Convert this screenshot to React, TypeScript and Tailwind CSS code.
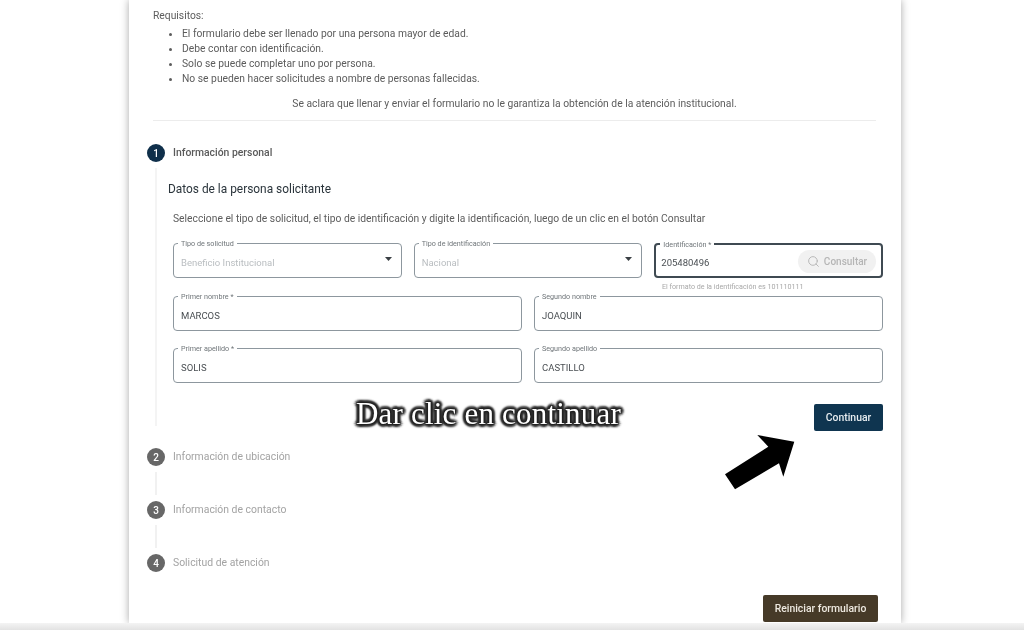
import React from "react"
import { Search } from "lucide-react"

const requisitos = [
    "El formulario debe ser llenado por una persona mayor de edad.",
    "Debe contar con identificación.",
    "Solo se puede completar uno por persona.",
    "No se pueden hacer solicitudes a nombre de personas fallecidas.",
]

const Caret = () => (
    <svg width="7" height="4" viewBox="0 0 7 4" className="mb-[3px] shrink-0">
        <path d="M0 0 L7 0 L3.5 4 Z" fill="#3a3f44" />
    </svg>
)

interface FieldProps {
    label: string,
    value: string,
    disabled?: boolean,
    focused?: boolean,
    className?: string,
    children?: React.ReactNode,
}

const Field = ({ label, value, disabled, focused, className, children }: FieldProps) => (
    <div className={`relative flex h-[35px] items-center rounded-[4px] bg-white ${focused ? "border-2 border-[#3f4a52] pl-[5px]" : "border border-[#8d979e] pl-[7px]"} ${className ?? ""}`}>
        <span className="absolute left-[4px] top-[-5px] bg-white px-[3px] text-[7.2px] leading-[9px] text-[#6f7579]">{label}</span>
        <span className={`flex-1 pt-[5px] text-[9.5px] ${disabled ? "text-[#b9bdc0]" : "text-[#4a4f53]"}`}>{value}</span>
        {children}
    </div>
)

const StepCircle = ({ n, active }: { n: number, active?: boolean }) => (
    <div className={`flex h-[18px] w-[18px] shrink-0 items-center justify-center rounded-full text-[10px] font-medium text-white ${active ? "bg-[#0f2f4a]" : "bg-[#676767]"}`}>
        {n}
    </div>
)

const Step = ({ n, label, last }: { n: number, label: string, last?: boolean }) => (
    <div className="flex flex-col">
        <div className="flex h-[18px] items-center gap-[8px]">
            <StepCircle n={n} />
            <span className="text-[10.4px] text-[#a3a3a3]">{label}</span>
        </div>
        {!last && <div className="my-[6px] ml-[8px] h-[23px] w-[2px] bg-[#f1f1f1]" />}
    </div>
)

export default function App() {
    return (
        <div className="flex h-[630px] w-[1024px] flex-col overflow-hidden bg-white font-['Roboto',sans-serif] blur-[0.4px]">
            <div className="ml-[129px] h-[623px] w-[772px] bg-white pl-[24px] pr-[18px] shadow-[0_0_8px_rgba(0,0,0,0.35)]">
                <p className="pt-[8px] text-[10.3px] leading-[15px] text-[#5c5c5c]">Requisitos:</p>
                <ul className="mt-[3px] list-disc pl-[29px] text-[10.3px] leading-[15px] text-[#5c5c5c]">
                    {requisitos.map((r) => <li key={r}>{r}</li>)}
                </ul>
                <p className="mr-[7px] mt-[10px] text-center text-[10.3px] leading-[15px] text-[#5c5c5c]">
                    Se aclara que llenar y enviar el formulario no le garantiza la obtención de la atención institucional.
                </p>
                <div className="mr-[7px] mt-[9px] h-px bg-[#ececec]" />

                <div className="ml-[-6px]">
                    <div className="mt-[23px] flex h-[18px] items-center gap-[8px]">
                        <StepCircle n={1} active />
                        <span className="text-[10.4px] font-medium text-[#5a5a5a]">Información personal</span>
                    </div>

                    <div className="flex">
                        <div className="my-[6px] ml-[8px] w-[2px] bg-[#f4f4f4]" />
                        <div className="flex-1 pl-[11px]">
                            <h2 className="mt-[18px] text-[11.9px] leading-[18px] text-[#2a343b]">Datos de la persona solicitante</h2>
                            <p className="mt-[13px] pl-[5px] text-[10.3px] leading-[15px] text-[#5c5c5c]">
                                Seleccione el tipo de solicitud, el tipo de identificación y digite la identificación, luego de un clic en el botón Consultar
                            </p>
                            <div className="ml-[5px] mt-[17px] flex flex-col">
                                <div className="grid grid-cols-3 gap-[12px]">
                                    <Field label="Tipo de solicitud" value="Beneficio Institucional" disabled className="pr-[9px]"><Caret /></Field>
                                    <Field label="Tipo de identificación" value="Nacional" disabled className="pr-[9px]"><Caret /></Field>
                                    <Field label="Identificación *" value="205480496" focused className="pr-[5px]">
                                        <div className="mt-[2px] flex h-[23px] w-[78px] items-center justify-center gap-[4px] rounded-full bg-[#f1f1f1] text-[10px] font-medium text-[#b5b5b5]">
                                            <Search size={13} strokeWidth={1.75} />
                                            <span>Consultar</span>
                                        </div>
                                    </Field>
                                </div>
                                <p className="ml-auto h-[18px] w-[228px] pl-[7px] pt-[4px] text-[7.15px] leading-[10px] text-[#a8a8a8]">El formato de la identificación es 101110111</p>
                                <div className="flex gap-[12px]">
                                    <Field label="Primer nombre *" value="MARCOS" className="flex-1" />
                                    <Field label="Segundo nombre" value="JOAQUIN" className="flex-1" />
                                </div>
                                <div className="mt-[17px] flex gap-[12px]">
                                    <Field label="Primer apellido *" value="SOLIS" className="flex-1" />
                                    <Field label="Segundo apellido" value="CASTILLO" className="flex-1" />
                                </div>
                                <div className="mt-[21px] flex items-start">
                                    <div className="ml-[183px] mt-[-8px] whitespace-nowrap font-['Liberation_Serif',serif] text-[31px] leading-[36px] tracking-[0.2px] text-white [text-shadow:0_0_3px_#222,1px_1px_1px_#222,-1px_-1px_1px_#222,1px_-1px_1px_#222,-1px_1px_1px_#222,3px_0_2px_#333,-3px_0_2px_#333,0_3px_2px_#333,0_-3px_2px_#333,2px_2px_2px_#333,-2px_-2px_2px_#333,2px_-2px_2px_#333,-2px_2px_2px_#333]">
                                        Dar clic en continuar
                                    </div>
                                    <button className="ml-auto h-[27px] w-[69px] rounded-[2px] bg-[#0f3550] text-[10.4px] font-medium text-[#e8edf0]">Continuar</button>
                                </div>
                            </div>
                        </div>
                    </div>

                    <div className="mt-[16px] flex flex-col">
                        <Step n={2} label="Información de ubicación" />
                        <Step n={3} label="Información de contacto" />
                        <Step n={4} label="Solicitud de atención" last />
                    </div>
                </div>

                <div className="mr-[5px] mt-[23px] flex justify-end">
                    <button className="h-[27px] w-[115px] rounded-[2px] bg-[#463a28] text-[10.4px] font-medium text-[#eee9e0]">Reiniciar formulario</button>
                </div>
            </div>
            <div className="h-[7px] bg-gradient-to-b from-[#f4f4f4] to-[#e2e2e2]" />

            {/* flecha sobre el contenido */}
            <svg width="1024" height="630" className="pointer-events-none absolute left-0 top-0">
                <polygon points="725,474.3 735,489.3 779,463.3 783.3,476.7 794.3,441.7 757.3,435 768.3,446.7" fill="#000" />
            </svg>
        </div>
    )
}
